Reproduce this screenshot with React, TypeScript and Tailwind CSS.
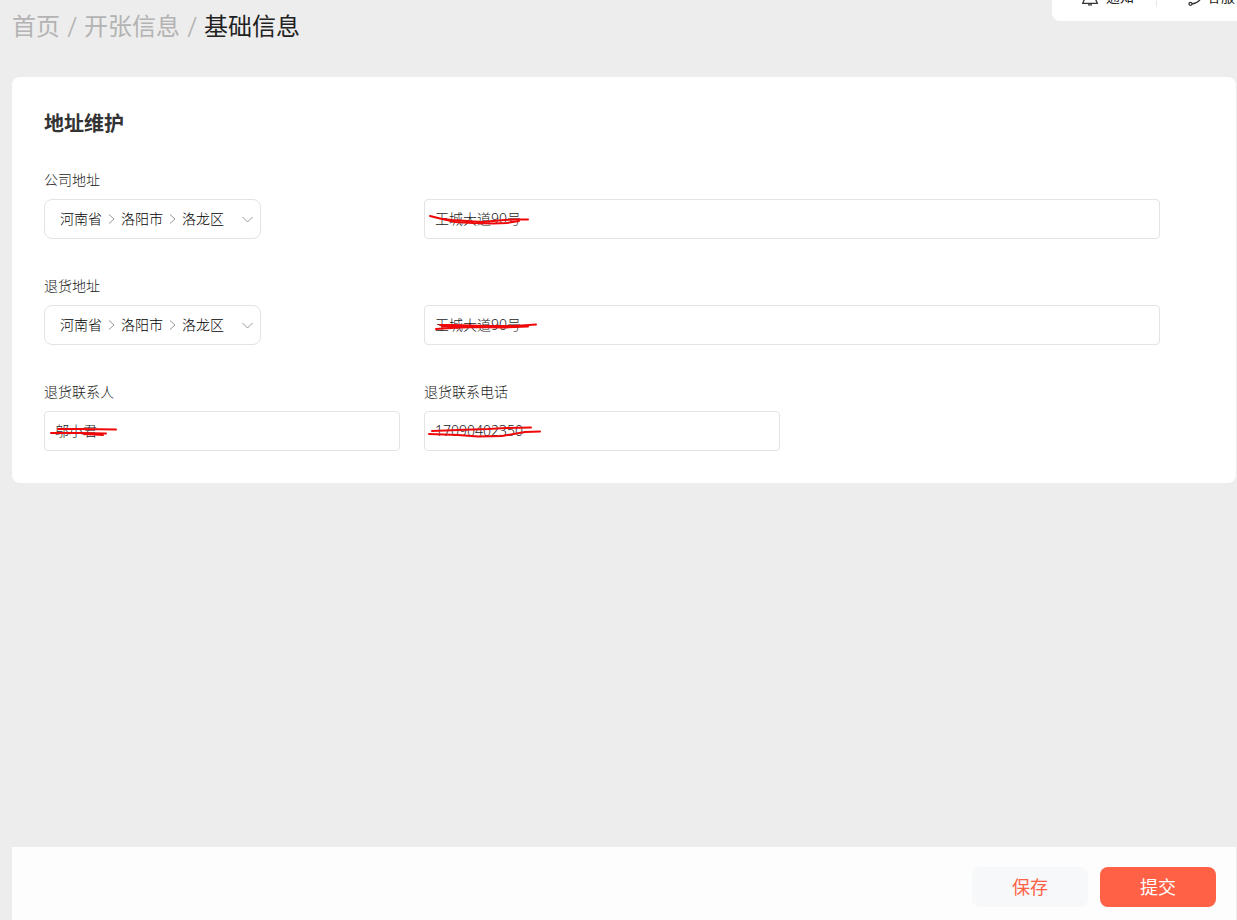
import React, { useState } from "react";

type Scribble = { width: number; height: number; left: string; paths: string[] };

function RegionPicker({ id, label, region }: { id: string; label: string; region: string[] }) {
  return (
    <div className="flex flex-col items-start gap-2">
      <label htmlFor={id} className="text-sm leading-[22px]">
        {label}
      </label>
      <button
        id={id}
        type="button"
        role="combobox"
        aria-haspopup="listbox"
        aria-expanded={false}
        className="flex h-10 w-[217px] items-center justify-between rounded-lg border border-[#e3e3e3] bg-white pl-[15px] pr-[7px] text-sm text-black"
      >
        <span className="flex items-center">
          {region.map((name, i) => (
            <React.Fragment key={name}>
              {i > 0 && (
                <svg className="w-[19px]" height="12" viewBox="0 0 19 12" fill="none" stroke="#999">
                  <path d="M7 1.500l5 4.500-5 4.500" />
                </svg>
              )}
              <span>{name}</span>
            </React.Fragment>
          ))}
        </span>
        <svg width="11" height="7" viewBox="0 0 11 7" fill="none" stroke="#999">
          <path d="M.5 1l5 5 5-5" />
        </svg>
      </button>
    </div>
  );
}

function TextField({
  id,
  label,
  hideLabel,
  initial,
  className,
  scribble,
}: {
  id: string;
  label: string;
  hideLabel?: boolean;
  initial: string;
  className?: string;
  scribble: Scribble;
}) {
  const [value, setValue] = useState(initial);
  return (
    <div className={`flex flex-col justify-end gap-2 ${className ?? ""}`}>
      {!hideLabel && (
        <label htmlFor={id} className="text-sm leading-[22px]">
          {label}
        </label>
      )}
      <div className="relative">
        <input
          id={id}
          aria-label={hideLabel ? label : undefined}
          value={value}
          onChange={(e) => setValue(e.target.value)}
          className="block h-10 w-full rounded border border-[#e3e3e3] bg-white px-[10px] pb-0.5 text-sm outline-none"
        />
        {/* red pen marks over the value */}
        <svg
          className={`pointer-events-none absolute top-3 ${scribble.left}`}
          width={scribble.width}
          height={scribble.height}
          fill="none"
          stroke="#f00808"
          strokeWidth="2"
          strokeLinecap="round"
          strokeLinejoin="round"
        >
          {scribble.paths.map((d) => (
            <path key={d} d={d} />
          ))}
        </svg>
      </div>
    </div>
  );
}

const marks: Record<string, Scribble> = {
  company: {
    width: 106,
    height: 16,
    left: "left-1",
    paths: ["M2 5l12 3 10 1 30 2 22-2 12-.5 12 0", "M15 8l12 3 18 1 20 .5 14-.5 12-2"],
  },
  returns: {
    width: 110,
    height: 16,
    left: "left-2",
    paths: ["M8 8h14l30 1h30l22-1.500", "M4 12l14-1 24-1 30 .5 24-1", "M10 9.500h34l30-.5"],
  },
  contact: {
    width: 76,
    height: 16,
    left: "left-1",
    paths: ["M10 6h22l36 .5", "M3 10h30l25 .5", "M36 11l10 .5 9 .5"],
  },
  phone: {
    width: 118,
    height: 18,
    left: "left-1",
    paths: ["M4 8l26-1 30-1 18-1 25-.5", "M1 11l29 1 20 1.500 24-.5 23-4 15-.5"],
  },
};

export default function App() {
  return (
    <div className="flex min-h-screen flex-col bg-[#ededed] pl-3 font-['Noto_Sans','Noto_Sans_CJK_SC',sans-serif] font-light text-[#1a1a1a]">
      <header className="flex items-start justify-between pb-[34px]">
        <nav aria-label="面包屑" className="pt-[9px]">
          <ol className="flex text-2xl font-normal leading-[34px] text-[#b3b3b3]">
            <li>
              <a href="#home">首页</a>
            </li>
            <li className="w-6 text-center text-[28px] font-light">/</li>
            <li>
              <a href="#opening">开张信息</a>
            </li>
            <li className="w-6 text-center text-[28px] font-light">/</li>
            <li aria-current="page" className="text-[#222]">
              基础信息
            </li>
          </ol>
        </nav>

        {/* Tool bar, mostly scrolled off the top */}
        <div className="flex h-[21px] w-[185px] items-end overflow-hidden rounded-bl-lg bg-white pb-[14px] pl-[30px] text-sm font-normal leading-5 text-[#222]">
          <button type="button" className="flex items-center gap-2">
            <svg width="16" height="18" viewBox="0 0 16 18" fill="none" stroke="#333" strokeWidth="1.3">
              <path d="M.7 15.300h14.600L13 10V7a5 5 0 0 0-10 0v3zM6 16.800h4M8 2V0" />
            </svg>
            通知
          </button>
          <span className="ml-[22px] h-5 w-px bg-[#e8e8e8]" />
          <button type="button" className="ml-[31px] flex items-center gap-1 whitespace-nowrap">
            <svg width="15" height="18" viewBox="0 0 15 18" fill="none" stroke="#333" strokeWidth="1.3">
              <path d="M1 9V7a6 6 0 0 1 12 0v2c-.5 3.500-4 6-9 7" />
              <circle cx="2.500" cy="15.800" r="1.500" />
            </svg>
            客服
          </button>
        </div>
      </header>

      <main className="mr-px flex-1">
        <section className="rounded-lg bg-white p-8">
          <h2 className="text-xl font-bold leading-[30px] text-[#333]">地址维护</h2>
          <form className="mt-[30px] grid grid-cols-3 gap-x-6 gap-y-9 pr-11">
            <RegionPicker id="company-region" label="公司地址" region={["河南省", "洛阳市", "洛龙区"]} />
            <TextField
              id="company-street"
              label="公司详细地址"
              hideLabel
              initial="王城大道90号"
              className="col-span-2"
              scribble={marks.company}
            />
            <RegionPicker id="return-region" label="退货地址" region={["河南省", "洛阳市", "洛龙区"]} />
            <TextField
              id="return-street"
              label="退货详细地址"
              hideLabel
              initial="王城大道90号"
              className="col-span-2"
              scribble={marks.returns}
            />
            <TextField id="contact" label="退货联系人" initial="邬小君" scribble={marks.contact} />
            <TextField id="phone" label="退货联系电话" initial="17090402350" scribble={marks.phone} />
          </form>
        </section>
      </main>

      <footer className="mr-px flex justify-end gap-3 bg-[#fdfdfd] pb-[13px] pr-5 pt-5 text-lg font-normal">
        <button type="button" className="h-10 w-[116px] rounded-lg bg-[#f6f8f9] text-[#ff6146]">
          保存
        </button>
        <button type="button" className="h-10 w-[116px] rounded-lg bg-[#ff6146] text-white">
          提交
        </button>
      </footer>
    </div>
  );
}
